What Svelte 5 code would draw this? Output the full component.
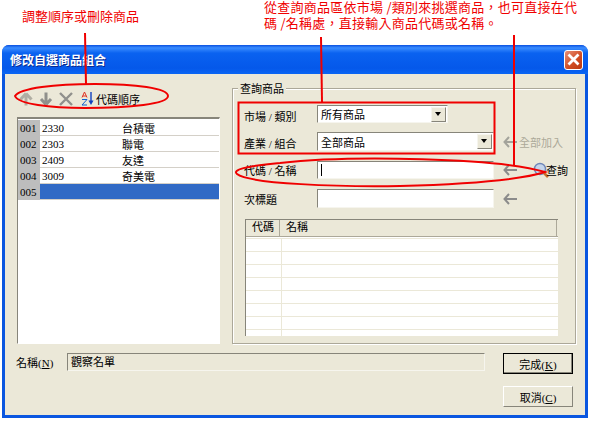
<script>
    const items = [
        { no: '001', code: '2330', name: '台積電' },
        { no: '002', code: '2303', name: '聯電' },
        { no: '003', code: '2409', name: '友達' },
        { no: '004', code: '3009', name: '奇美電' },
        { no: '005', code: '', name: '', selected: true }
    ]
    const emptyRows = [1, 2, 3, 4, 5, 6, 7, 8]
</script>

<div class="page">
    <div class="window">
        <div class="titlebar">
            <span class="title">修改自選商品組合</span>
            <button class="close" aria-label="關閉">
                <svg width="13" height="13" viewBox="0 0 13 13"><path d="M1.500 1.500l10 10M11.500 1.500l-10 10" stroke="#fff" stroke-width="2.800" /></svg>
            </button>
        </div>
        <div class="client">
            <div class="main">
                <div class="left">
                    <div class="toolbar">
                        <svg width="14" height="14" viewBox="0 0 14 14" class="tool-up"><path d="M7 1.500L1.500 7.500M7 1.500l5.500 6M7 2v11.500" fill="none" stroke="#b0aea3" stroke-width="3" /></svg>
                        <svg width="14" height="14" viewBox="0 0 14 14" class="tool-down"><path d="M7 12.500L2 7M7 12.500L12 7M7 12V.500" fill="none" stroke="#90908c" stroke-width="3" /></svg>
                        <svg width="14" height="14" viewBox="0 0 14 14" class="tool-del"><path d="M1 1l12 12M13 1L1 13" fill="none" stroke="#90908c" stroke-width="2.400" /></svg>
                        <svg width="14" height="15" viewBox="0 0 14 15" class="tool-sort">
                            <path d="M1 6.500L3.500 1 6 6.500M1.800 5h3.400" fill="none" stroke="#e03020" stroke-width="1" />
                            <path d="M1 8.500h5L1 14h5" fill="none" stroke="#1060d0" stroke-width="1" />
                            <path d="M10 1v11" stroke="#1040c0" stroke-width="1.400" />
                            <path d="M7.500 9.500h5L10 14z" fill="#1040c0" />
                        </svg>
                        <span class="tool-label">代碼順序</span>
                    </div>
                    <div class="list">
                        {#each items as item}
                            <div class="list-row" class:selected={item.selected}>
                                <span class="no">{item.no}</span>
                                <span class="code">{item.code}</span>
                                <span class="name">{item.name}</span>
                            </div>
                        {/each}
                    </div>
                </div>

                <div class="group">
                    <span class="legend">查詢商品</span>
                    <div class="row row-market">
                        <span class="label">市場 / 類別</span>
                        <div class="control select short">
                            <span>所有商品</span>
                            <span class="drop"></span>
                        </div>
                    </div>
                    <div class="row row-industry">
                        <span class="label">產業 / 組合</span>
                        <div class="control select">
                            <span>全部商品</span>
                            <span class="drop"></span>
                        </div>
                        <svg class="arrow" width="15" height="12" viewBox="0 0 15 12"><path d="M6 1L1.500 6 6 11M1.500 6H14" fill="none" stroke="#a3a39b" stroke-width="2" /></svg>
                        <span class="add-all">全部加入</span>
                    </div>
                    <div class="row row-code">
                        <span class="label">代碼 / 名稱</span>
                        <div class="control"><span class="caret"></span></div>
                        <svg class="arrow" width="15" height="12" viewBox="0 0 15 12"><path d="M6 1L1.500 6 6 11M1.500 6H14" fill="none" stroke="#8b8b8b" stroke-width="2" /></svg>
                        <svg class="lens" width="17" height="17" viewBox="0 0 17 17">
                            <circle cx="7" cy="7" r="5.500" fill="#c4d4ea" stroke="#6f86b8" stroke-width="1.400" />
                            <path d="M11 11l4 4" stroke="#c8702a" stroke-width="2.600" />
                        </svg>
                        <span class="query">查詢</span>
                    </div>
                    <div class="row row-sub">
                        <span class="label">次標題</span>
                        <div class="control"></div>
                        <svg class="arrow" width="15" height="12" viewBox="0 0 15 12"><path d="M6 1L1.500 6 6 11M1.500 6H14" fill="none" stroke="#8b8b8b" stroke-width="2" /></svg>
                    </div>
                    <div class="table">
                        <div class="thead">
                            <span class="th th-code">代碼</span>
                            <span class="th th-name">名稱</span>
                        </div>
                        <div class="rows">
                            {#each emptyRows as r}
                                <div class="tr"><span class="td-code"></span><span></span></div>
                            {/each}
                        </div>
                    </div>
                </div>
            </div>

            <div class="bottom">
                <div class="bottom-fields">
                    <span class="name-label">名稱(<u>N</u>)</span>
                    <div class="name-field">觀察名單</div>
                </div>
                <div class="buttons">
                    <button class="btn default">完成(<u>K</u>)</button>
                    <button class="btn">取消(<u>C</u>)</button>
                </div>
            </div>
        </div>
    </div>

    <span class="note note-left">調整順序或刪除商品</span>
    <div class="note note-right">
        <span>從查詢商品區依市場 /類別來挑選商品，也可直接在代</span>
        <span>碼 /名稱處，直接輸入商品代碼或名稱。</span>
    </div>

    <svg class="marks" width="595" height="422" viewBox="0 0 595 422">
        <g fill="none" stroke="#f00000" stroke-width="2">
            <path d="M85 33l1 51" />
            <path d="M321 37l1 65" />
            <path d="M514 35v131" />
            <path d="M15 96C20 88 55 84 95 84C135 84 168 88 168 96C168 104 130 108 85 108C50 108 18 104 15 96Z" />
            <rect x="238.500" y="102.500" width="256" height="51" />
            <path d="M545 172C500 158 350 155 280 163C245 166 232 170 237 174C250 184 340 187 400 186C470 184 520 180 545 172Z" />
        </g>
    </svg>
</div>

<style>
    :global(body) {
        background: #fff;
    }

    .page {
        position: relative;
        width: 595px;
        height: 422px;
        overflow: hidden;
        font-family: "Liberation Serif", "Noto Sans CJK TC", serif;
        font-size: 11px;
        color: #000;
    }

    .window {
        display: flex;
        flex-direction: column;
        width: 586px;
        height: 373px;
        margin: 45px 0 0 2px;
        box-sizing: border-box;
        border-radius: 7px 7px 0 0;
        background: #0a56e0;
    }

    .titlebar {
        display: flex;
        align-items: center;
        justify-content: space-between;
        flex: 0 0 29px;
        padding: 0 5px 0 8px;
        border-radius: 7px 7px 0 0;
        background: linear-gradient(#0a50e0 0, #3a8cff 10%, #0a62f0 28%, #0558ea 80%, #0a66f4 100%);
    }

    .title {
        font-family: "Noto Sans CJK TC", sans-serif;
        font-size: 12px;
        font-weight: 700;
        color: #fff;
        text-shadow: 1px 1px 0 #0a2a90;
    }

    .close {
        display: flex;
        align-items: center;
        justify-content: center;
        width: 19px;
        height: 20px;
        padding: 0;
        border: 1px solid #fff;
        border-radius: 3px;
        background: linear-gradient(135deg, #e89078, #d04a20 60%, #b83810);
    }

    .client {
        display: flex;
        flex: 1;
        flex-direction: column;
        margin: 0 3px 3px;
        padding: 14px 9px 0 12px;
        background: #ebe8d8;
    }

    .main {
        display: flex;
        gap: 12px;
        height: 256px;
    }

    .left {
        display: flex;
        flex-direction: column;
        width: 203px;
    }

    .toolbar {
        display: flex;
        align-items: center;
        height: 29px;
        padding: 0 0 8px 2px;
        box-sizing: border-box;
    }

    .tool-down,
    .tool-del {
        margin-left: 6px;
    }

    .tool-sort {
        margin-left: 8px;
    }

    .tool-label {
        margin-left: 1px;
        font-family: "Noto Sans CJK TC", sans-serif;
    }

    .list {
        flex: 1;
        padding-top: 1px;
        border-style: solid;
        border-width: 2px 1px 1px 1px;
        border-color: #87857a #fff #fff #87857a;
        background: #fff;
    }

    .list-row {
        display: flex;
        align-items: center;
        height: 15px;
        border-bottom: 1px solid #d4d0c8;
    }

    .no {
        width: 22px;
        height: 16px;
        padding-left: 2px;
        box-sizing: border-box;
        line-height: 16px;
        background: #bdbdbd;
    }

    .code {
        width: 82px;
        padding-left: 2px;
        box-sizing: border-box;
    }

    .selected {
        background: #316ac5;
    }

    .group {
        position: relative;
        display: flex;
        flex-direction: column;
        width: 344px;
        padding: 16px 0 0 12px;
        box-sizing: border-box;
        border: 1px solid #aca899;
        box-shadow: 1px 1px 0 #fff, inset 1px 1px 0 #fff;
    }

    .legend {
        position: absolute;
        top: -8px;
        left: 5px;
        padding: 0 2px;
        line-height: 16px;
        background: #ebe8d8;
    }

    .row {
        display: flex;
        align-items: center;
    }

    .row-market {
        height: 18px;
    }

    .row-industry {
        height: 19px;
        margin-top: 9px;
    }

    .row-code {
        height: 18px;
        margin-top: 10px;
    }

    .row-sub {
        height: 19px;
        margin-top: 10px;
    }

    .label {
        width: 72px;
        margin-left: -1px;
        margin-right: 1px;
    }

    .row-market .label,
    .row-industry .label {
        margin-top: 3px;
    }

    .control {
        display: flex;
        align-items: center;
        justify-content: space-between;
        align-self: stretch;
        width: 177px;
        box-sizing: border-box;
        padding-left: 3px;
        border-style: solid;
        border-width: 1px;
        border-color: #87857a #f6f5ee #f6f5ee #87857a;
        background: #fff;
    }

    .short {
        width: 131px;
    }

    .select {
        padding-right: 1px;
    }

    .drop {
        position: relative;
        width: 15px;
        height: 15px;
        box-sizing: border-box;
        border-style: solid;
        border-width: 1px;
        border-color: #f6f5ee #87857a #87857a #f6f5ee;
        background: #ebe8d8;
    }

    .drop::after {
        content: "";
        position: absolute;
        top: 4px;
        left: 3px;
        border-style: solid;
        border-width: 4px 3.500px 0;
        border-color: #000 transparent transparent;
    }

    .caret {
        width: 1px;
        height: 12px;
        background: #000;
    }

    .arrow {
        margin-left: 9px;
    }

    .add-all {
        margin-left: 1px;
        color: #aca899;
    }

    .lens {
        margin-left: 15px;
    }

    .query {
        margin-left: -4px;
    }

    .table {
        width: 313px;
        height: 117px;
        margin-top: 11px;
        box-sizing: border-box;
        overflow: hidden;
        border-style: solid;
        border-width: 1px 0 0 1px;
        border-color: #87857a;
        background: #fff;
    }

    .thead {
        display: flex;
        height: 16px;
        margin-bottom: 1px;
        background: #ebe8d8;
        border-bottom: 1px solid #aca899;
    }

    .th {
        padding-left: 6px;
        box-sizing: border-box;
        line-height: 15px;
        border-right: 1px solid #aca899;
    }

    .th-code {
        width: 34px;
    }

    .th-name {
        width: 277px;
    }

    .rows {
        border-top: 1px solid #ebe8d8;
    }

    .tr {
        display: flex;
        height: 13px;
        box-sizing: border-box;
        border-bottom: 1px solid #ebe8d8;
    }

    .td-code {
        width: 35px;
        border-right: 1px solid #ebe8d8;
    }

    .bottom {
        display: flex;
        align-items: flex-start;
        justify-content: space-between;
        padding-top: 9px;
    }

    .bottom-fields {
        display: flex;
        align-items: center;
        height: 18px;
    }

    .name-label {
        width: 51px;
        margin-left: -1px;
    }

    .name-field {
        width: 418px;
        height: 18px;
        padding-left: 3px;
        box-sizing: border-box;
        line-height: 16px;
        border-style: solid;
        border-width: 1px;
        border-color: #87857a #f6f5ee #f6f5ee #87857a;
    }

    .buttons {
        display: flex;
        flex-direction: column;
        gap: 12px;
        margin-right: 3px;
    }

    .btn {
        width: 70px;
        height: 21px;
        padding: 0;
        font: inherit;
        border-style: solid;
        border-width: 1px;
        border-color: #fff #87857a #87857a #fff;
        background: #ebe8d8;
    }

    .default {
        border-color: #000;
        box-shadow: inset -1px -1px 0 #87857a;
    }

    .note {
        position: absolute;
        margin: 0;
        font-family: "Noto Sans CJK TC", sans-serif;
        font-size: 13px;
        line-height: 14px;
        color: #f00000;
    }

    .note-left {
        top: 9px;
        left: 22px;
    }

    .note-right {
        display: flex;
        flex-direction: column;
        gap: 2px;
        top: 0;
        left: 264px;
        letter-spacing: 0.25px;
        white-space: nowrap;
    }

    .marks {
        position: absolute;
        top: 0;
        left: 0;
        pointer-events: none;
    }
</style>
